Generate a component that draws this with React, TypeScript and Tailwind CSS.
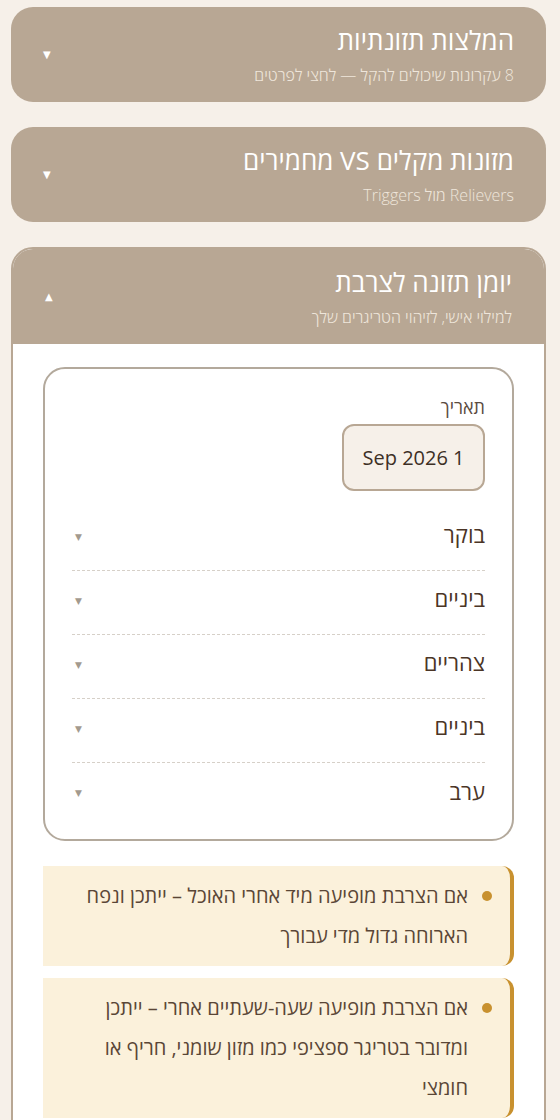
const font = { fontFamily: '"Open Sans", "DejaVu Sans", sans-serif' };

const sections = [
  { title: "המלצות תזונתיות", subtitle: "8 עקרונות שיכולים להקל — לחצי לפרטים" },
  { title: "מזונות מקלים VS מחמירים", subtitle: "Relievers מול Triggers" },
];

const meals = ["בוקר", "ביניים", "צהריים", "ביניים", "ערב"];

const tips = [
  "אם הצרבת מופיעה מיד אחרי האוכל – ייתכן ונפח הארוחה גדול מדי עבורך",
  "אם הצרבת מופיעה שעה-שעתיים אחרי – ייתכן ומדובר בטריגר ספציפי כמו מזון שומני, חריף או חומצי",
];

function Header({ title, subtitle, open }: { title: string; subtitle: string; open?: boolean }) {
  return (
    <div className="flex items-center justify-between h-[95px] pr-8 pl-8">
      <div className="flex flex-col">
        <h2 className="text-[26px] leading-[36px] text-white">{title}</h2>
        <p className="text-[16px] leading-[26px] text-[#efe6db] font-light mt-1">{subtitle}</p>
      </div>
      <span className="text-[10px] text-white">{open ? "▲" : "▼"}</span>
    </div>
  );
}

export default function App() {
  return (
    <div dir="rtl" style={font} className="h-[1120px] overflow-hidden bg-[#f6f0e9] pr-[14px] pl-[11px] pt-[7px] flex flex-col gap-[25px]">
      {sections.map((s) => (
        <div key={s.title} className="bg-[#b8a794] rounded-[22px] shrink-0">
          <Header title={s.title} subtitle={s.subtitle} />
        </div>
      ))}

      <div className="rounded-t-[22px] border-2 border-[#b8a794] bg-white shrink-0">
        <div className="bg-[#b8a794] rounded-t-[20px]">
          <Header title="יומן תזונה לצרבת" subtitle="למילוי אישי, לזיהוי הטריגרים שלך" open />
        </div>

        <div className="px-[30px] pt-[23px] pb-8">
          <div className="border-2 border-[#b3a99c] rounded-[22px] px-[27px] pt-[25px] pb-[12px]">
            <label className="block text-[18px] leading-[27px] text-[#5b4b3f]">תאריך</label>
            <div className="mt-[3px] w-[143px] h-[67px] rounded-[12px] border-2 border-[#b8a794] bg-[#f6f0e9] flex items-center justify-center">
              <span dir="ltr" className="text-[20px] text-[#3d2f25]">Sep 2026 1</span>
            </div>

            <div className="mt-[16px] flex flex-col">
              {meals.map((m, i) => (
                <div
                  key={i}
                  className={`h-16 flex items-center justify-between ${i < meals.length - 1 ? "border-b border-dashed border-[#d6d0c8]" : ""}`}
                >
                  <span className="text-[22px] text-[#4b3526] -mt-2">{m}</span>
                  <span className="text-[9px] text-[#a39a8e] pl-[3px] -mt-1">▼</span>
                </div>
              ))}
            </div>
          </div>

          <div className="mt-[25px] flex flex-col gap-3">
            {tips.map((t, i) => (
              <div key={i} className="bg-[#fbf1db] border-r-4 border-[#c8912f] rounded-r-[12px] pr-[18px] pl-6 py-[10px] flex items-start gap-[14px]">
                <span className="mt-[15px] w-[10px] h-[10px] rounded-full bg-[#c8912f] shrink-0" />
                <p className="text-[20px] leading-[40px] text-[#5a4636]">{t}</p>
              </div>
            ))}
          </div>
        </div>
      </div>
    </div>
  );
}
